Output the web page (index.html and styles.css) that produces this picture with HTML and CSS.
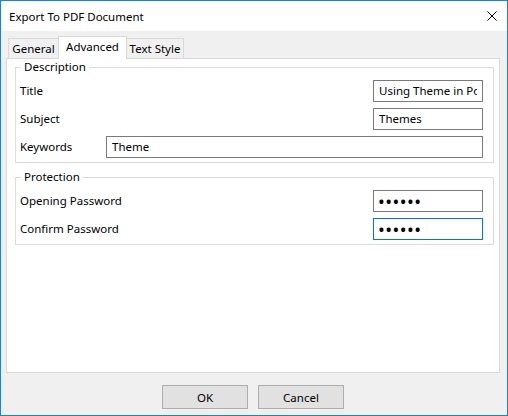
FILE: index.html
```html
<!DOCTYPE html>
<html lang="en">
<head>
    <meta charset="UTF-8">
    <title>Export To PDF Document</title>
    <link rel="stylesheet" href="styles.css">
</head>
<body>

<div class="window">
    <div class="titlebar">
        <span class="title">Export To PDF Document</span>
        <svg class="close" width="10" height="10" viewBox="0 0 10 10">
            <path d="M0.5 0.5 L9.5 9.5 M9.5 0.5 L0.5 9.5" stroke="#000" stroke-width="1" fill="none"/>
        </svg>
    </div>

    <div class="content">
        <div class="tabs">
            <div class="tab tab-first">General</div>
            <div class="tab tab-active">Advanced</div>
            <div class="tab tab-last">Text Style</div>
        </div>

        <div class="panel">
            <fieldset class="group">
                <legend>Description</legend>
                <div class="row">
                    <label>Title</label>
                    <input class="field" type="text" value="Using Theme in PowerPoint">
                </div>
                <div class="row">
                    <label>Subject</label>
                    <input class="field" type="text" value="Themes">
                </div>
                <div class="row">
                    <label class="label-wide">Keywords</label>
                    <input class="field field-wide" type="text" value="Theme">
                </div>
            </fieldset>

            <fieldset class="group group-spaced">
                <legend>Protection</legend>
                <div class="row">
                    <label>Opening Password</label>
                    <input class="field pass" type="password" value="123456">
                </div>
                <div class="row">
                    <label>Confirm Password</label>
                    <input class="field pass focused" type="password" value="123456">
                </div>
            </fieldset>
        </div>

        <div class="buttons">
            <button class="btn">OK</button>
            <button class="btn">Cancel</button>
        </div>
    </div>
</div>

</body>
</html>
```

FILE: styles.css
```css
body {
    margin: 0;
    font-family: "Noto Sans", "Open Sans", sans-serif;
    font-size: 11.5px;
    color: #000;
}

.window {
    width: 508px;
    height: 416px;
    box-sizing: border-box;
    border: 1px solid #1883d7;
    background: #f0f0f0;
    display: flex;
    flex-direction: column;
}

.titlebar {
    height: 30px;
    background: #fff;
    display: flex;
    align-items: center;
    justify-content: space-between;
    padding: 0 10px 0 8px;
}

.close {
    display: block;
}

.content {
    padding: 5px 7px 0 5px;
}

.tabs {
    display: flex;
    align-items: flex-end;
    height: 22px;
    padding-left: 2px;
}

.tab {
    height: 20px;
    line-height: 19px;
    box-sizing: border-box;
    background: #f0f0f0;
    border: 1px solid #d9d9d9;
    border-bottom: none;
    text-align: center;
}

.tab-first {
    width: 50px;
    border-right: none;
}

.tab-active {
    width: 69px;
    height: 23px;
    margin-bottom: -1px;
    line-height: 20px;
    background: #fff;
}

.tab-last {
    width: 57px;
    border-left: none;
}

.panel {
    height: 315px;
    box-sizing: border-box;
    background: #fff;
    border: 1px solid #d9d9d9;
    padding: 1px 5px 0 8px;
}

.group {
    margin: 0;
    padding: 6px 10px 4px 4px;
    border: 1px solid #dcdcdc;
    display: flex;
    flex-direction: column;
    gap: 6px;
}

.group legend {
    padding: 0 3px;
    margin-left: 1px;
    line-height: 14px;
}

.group-spaced {
    margin-top: 7px;
}

.row {
    display: flex;
    align-items: center;
    justify-content: space-between;
    height: 22px;
}

.row label {
    padding-bottom: 2px;
}

.label-wide {
    width: 86px;
}

.field {
    width: 110px;
    height: 22px;
    box-sizing: border-box;
    border: 1px solid #7a7a7a;
    padding: 0 5px 1px;
    font-family: inherit;
    font-size: 11.5px;
    color: #000;
    outline: none;
}

.field-wide {
    flex: 1;
}

.pass {
    font-size: 18px;
    letter-spacing: 0.5px;
    padding-left: 4px;
}

.focused {
    border-color: #0078d7;
}

.buttons {
    display: flex;
    justify-content: center;
    gap: 10px;
    margin-top: 12px;
}

.btn {
    width: 86px;
    height: 24px;
    background: #e1e1e1;
    border: 1px solid #adadad;
    font-family: inherit;
    font-size: 11.5px;
    color: #000;
    padding: 0;
}
```
